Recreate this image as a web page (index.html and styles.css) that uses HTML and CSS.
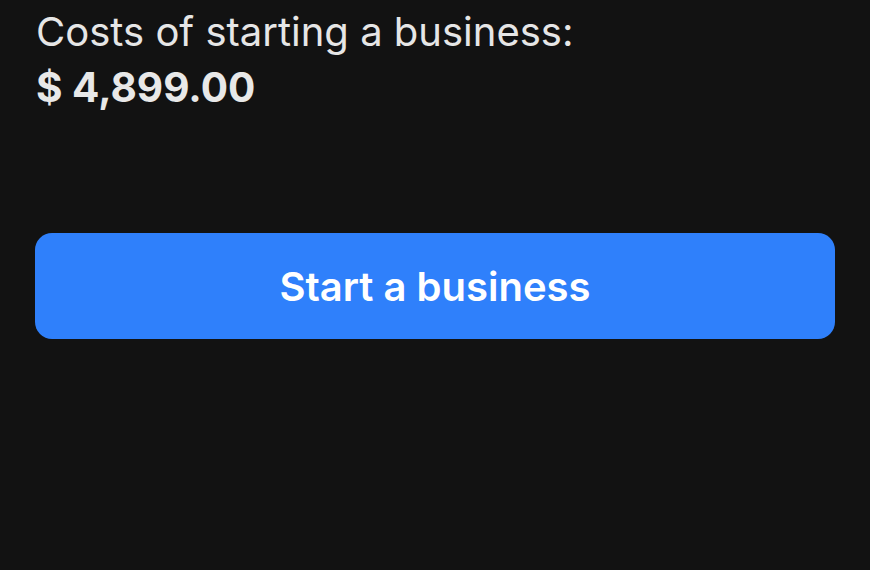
FILE: index.html
```html
<!DOCTYPE html>
<html>
<head>
<meta charset="utf-8">
<link rel="stylesheet" href="styles.css">
</head>
<body>
<main class="screen">
  <section class="cost">
    <p class="cost-label">Costs of starting a business:</p>
    <p class="cost-value">$ 4,899.00</p>
  </section>
  <button class="cta">Start a business</button>
</main>
</body>
</html>
```
FILE: styles.css
```css
html, body {
  margin: 0;
  padding: 0;
  background: #121212;
}
body {
  width: 870px;
  height: 570px;
  overflow: hidden;
  font-family: Inter, "Noto Sans", sans-serif;
}
.screen {
  display: flex;
  flex-direction: column;
  padding: 6px 35px 0 36px;
}
.cost {
  display: flex;
  flex-direction: column;
}
.cost-label {
  margin: 0;
  color: #e6e6e6;
  font-size: 40px;
  font-weight: 400;
  line-height: 52px;
}
.cost-value {
  margin: 0;
  color: #e8e8e8;
  font-size: 40.5px;
  font-weight: 700;
  line-height: 59px;
}
.cta {
  margin: 116px 0 0 -1px;
  height: 106px;
  border: none;
  border-radius: 17px;
  background: #2f80fb;
  color: #ffffff;
  font-family: Inter, "Noto Sans", sans-serif;
  font-size: 40px;
  font-weight: 600;
}
```
